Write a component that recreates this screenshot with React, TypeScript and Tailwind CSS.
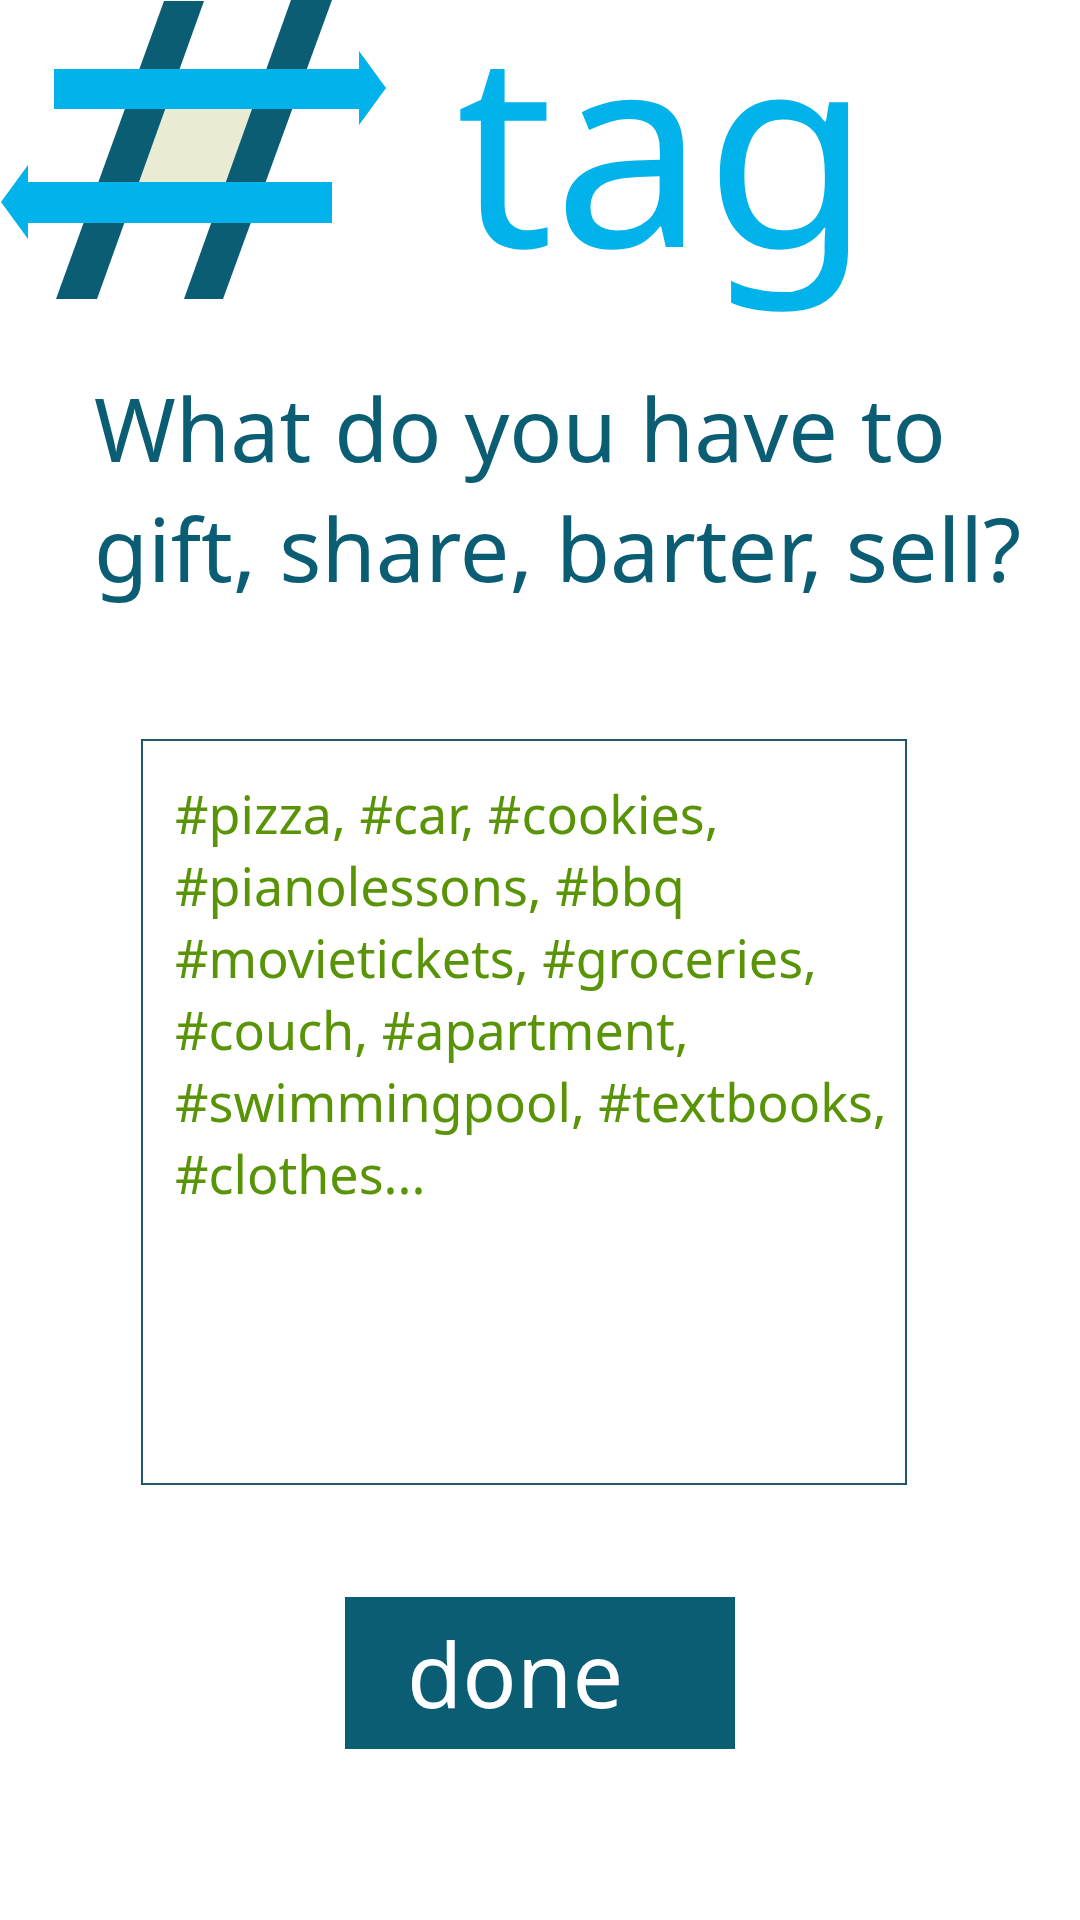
function HashLogo() {
  return (
    <svg className="h-[300px] w-[388px] shrink-0" viewBox="0 0 388 300" role="img" aria-label="Hash made of two arrows">
      <polygon points="165,109 252,109 226,182 139,182" fill="#e9ebd3" />
      <polygon points="164,1 204,1 97,299 56,299" fill="#0b5d74" />
      <polygon points="291,0 332,0 223,299 184,299" fill="#0b5d74" />
      <polygon points="54,69 359,69 359,51 386,88 359,125 359,109 54,109" fill="#01b2eb" />
      <polygon points="332,182 28,182 28,165 1,202 28,239 28,223 332,223" fill="#01b2eb" />
    </svg>
  );
}

const SAMPLE_TAGS = [
  "#pizza, #car, #cookies,",
  "#pianolessons, #bbq",
  "#movietickets, #groceries,",
  "#couch, #apartment,",
  "#swimmingpool, #textbooks,",
  "#clothes...",
].join("\n");

export default function App() {
  return (
    <div className="min-h-screen bg-white font-['Noto_Sans',sans-serif]">
      <header className="flex items-start gap-[68px]">
        <HashLogo />
        <p className="text-[270px] leading-[284px] text-[#01b2eb]">tag</p>
      </header>
      <main>
        <form onSubmit={(event) => event.preventDefault()}>
          <h1 className="mt-[68px] pl-[94px] text-[88px] leading-[120px] text-[#0b5d74]">
            <label htmlFor="tags">
              What do you have to
              <br />
              gift, share, barter, sell?
            </label>
          </h1>
          <div className="mt-[131px] pr-[173px] pl-[141px]">
            <textarea
              id="tags"
              defaultValue={SAMPLE_TAGS}
              className="block h-[746px] w-full resize-none overflow-hidden border-2 border-[#20586a] bg-transparent pt-[37px] pl-[32px] text-[52px] leading-[72px] whitespace-pre text-[#599306] outline-none"
            />
          </div>
          <button
            type="submit"
            className="mx-auto mt-28 block h-[152px] w-[390px] bg-[#0b5d74] pl-[62px] text-left text-[90px] leading-[152px] text-white"
          >
            done
          </button>
        </form>
      </main>
    </div>
  );
}
